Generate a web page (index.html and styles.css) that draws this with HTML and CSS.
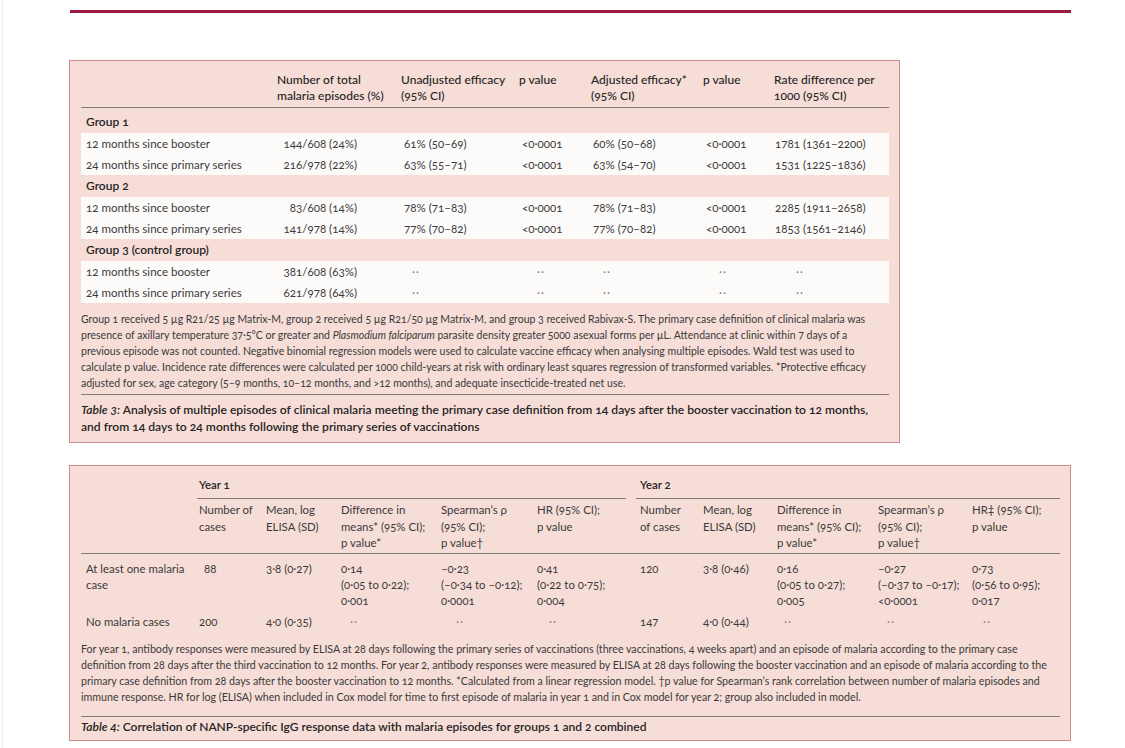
FILE: index.html
```html
<!DOCTYPE html>
<html lang="en">
<head>
<meta charset="utf-8">
<title>Tables 3 and 4</title>
<link rel="stylesheet" href="styles.css">
</head>
<body>
<div class="page">
  <div class="topline"></div>

  <section class="box t3">
    <div class="g3 head">
      <div></div>
      <div>Number of total<br>malaria episodes (%)</div>
      <div>Unadjusted efficacy<br>(95% CI)</div>
      <div>p value</div>
      <div>Adjusted efficacy*<br>(95% CI)</div>
      <div>p value</div>
      <div>Rate difference per<br>1000 (95% CI)</div>
    </div>
    <div class="rule"></div>
    <div class="t3body">
      <div class="grp">Group 1</div>
      <div class="band">
        <div class="g3 row">
          <div class="lab">12 months since booster</div>
          <div class="num">144/608 (24%)</div>
          <div class="c2">61% (50–69)</div>
          <div class="c3">&lt;0·0001</div>
          <div class="c4">60% (50–68)</div>
          <div class="c5">&lt;0·0001</div>
          <div class="c6">1781 (1361–2200)</div>
        </div>
        <div class="g3 row">
          <div class="lab">24 months since primary series</div>
          <div class="num">216/978 (22%)</div>
          <div class="c2">63% (55–71)</div>
          <div class="c3">&lt;0·0001</div>
          <div class="c4">63% (54–70)</div>
          <div class="c5">&lt;0·0001</div>
          <div class="c6">1531 (1225–1836)</div>
        </div>
      </div>
      <div class="grp">Group 2</div>
      <div class="band">
        <div class="g3 row">
          <div class="lab">12 months since booster</div>
          <div class="num">83/608 (14%)</div>
          <div class="c2">78% (71–83)</div>
          <div class="c3">&lt;0·0001</div>
          <div class="c4">78% (71–83)</div>
          <div class="c5">&lt;0·0001</div>
          <div class="c6">2285 (1911–2658)</div>
        </div>
        <div class="g3 row">
          <div class="lab">24 months since primary series</div>
          <div class="num">141/978 (14%)</div>
          <div class="c2">77% (70–82)</div>
          <div class="c3">&lt;0·0001</div>
          <div class="c4">77% (70–82)</div>
          <div class="c5">&lt;0·0001</div>
          <div class="c6">1853 (1561–2146)</div>
        </div>
      </div>
      <div class="grp">Group 3 (control group)</div>
      <div class="band">
        <div class="g3 row">
          <div class="lab">12 months since booster</div>
          <div class="num">381/608 (63%)</div>
          <div class="c2 dots d2">··</div>
          <div class="c3 dots d3">··</div>
          <div class="c4 dots d4">··</div>
          <div class="c5 dots d5">··</div>
          <div class="c6 dots d6">··</div>
        </div>
        <div class="g3 row">
          <div class="lab">24 months since primary series</div>
          <div class="num">621/978 (64%)</div>
          <div class="c2 dots d2">··</div>
          <div class="c3 dots d3">··</div>
          <div class="c4 dots d4">··</div>
          <div class="c5 dots d5">··</div>
          <div class="c6 dots d6">··</div>
        </div>
      </div>
    </div>
    <p class="note n3">Group 1 received 5 µg R21/25 µg Matrix-M, group 2 received 5 µg R21/50 µg Matrix-M, and group 3 received Rabivax-S. The primary case definition of clinical malaria was<br>presence of axillary temperature 37·5°C or greater and <i>Plasmodium falciparum</i> parasite density greater 5000 asexual forms per µL. Attendance at clinic within 7 days of a<br>previous episode was not counted. Negative binomial regression models were used to calculate vaccine efficacy when analysing multiple episodes. Wald test was used to<br>calculate p value. Incidence rate differences were calculated per 1000 child-years at risk with ordinary least squares regression of transformed variables. *Protective efficacy<br>adjusted for sex, age category (5–9 months, 10–12 months, and &gt;12 months), and adequate insecticide-treated net use.</p>
    <div class="rule r3"></div>
    <p class="caption c3cap"><i>Table 3:</i> Analysis of multiple episodes of clinical malaria meeting the primary case definition from 14 days after the booster vaccination to 12 months,<br>and from 14 days to 24 months following the primary series of vaccinations</p>
  </section>

  <section class="box t4">
    <div class="g4 years">
      <div class="y1">Year 1</div>
      <div class="y2">Year 2</div>
    </div>
    <div class="g4 sub">
      <div></div>
      <div>Number of<br>cases</div>
      <div>Mean, log<br>ELISA (SD)</div>
      <div>Difference in<br>means* (95% CI);<br>p value*</div>
      <div>Spearman’s ρ<br>(95% CI);<br>p value†</div>
      <div>HR (95% CI);<br>p value</div>
      <div>Number<br>of cases</div>
      <div>Mean, log<br>ELISA (SD)</div>
      <div>Difference in<br>means* (95% CI);<br>p value*</div>
      <div>Spearman’s ρ<br>(95% CI);<br>p value†</div>
      <div>HR‡ (95% CI);<br>p value</div>
    </div>
    <div class="rule r4"></div>
    <div class="g4 data">
      <div class="lab">At least one malaria<br>case</div>
      <div class="i88">88</div>
      <div>3·8 (0·27)</div>
      <div>0·14<br>(0·05 to 0·22);<br>0·001</div>
      <div>–0·23<br>(–0·34 to –0·12);<br>0·0001</div>
      <div>0·41<br>(0·22 to 0·75);<br>0·004</div>
      <div>120</div>
      <div>3·8 (0·46)</div>
      <div>0·16<br>(0·05 to 0·27);<br>0·005</div>
      <div>–0·27<br>(–0·37 to –0·17);<br>&lt;0·0001</div>
      <div>0·73<br>(0·56 to 0·95);<br>0·017</div>
    </div>
    <div class="g4 data none">
      <div class="lab">No malaria cases</div>
      <div>200</div>
      <div>4·0 (0·35)</div>
      <div class="dots e3">··</div>
      <div class="dots e4">··</div>
      <div class="dots e5">··</div>
      <div>147</div>
      <div>4·0 (0·44)</div>
      <div class="dots e8">··</div>
      <div class="dots e9">··</div>
      <div class="dots e10">··</div>
    </div>
    <p class="note n4">For year 1, antibody responses were measured by ELISA at 28 days following the primary series of vaccinations (three vaccinations, 4 weeks apart) and an episode of malaria according to the primary case<br>definition from 28 days after the third vaccination to 12 months. For year 2, antibody responses were measured by ELISA at 28 days following the booster vaccination and an episode of malaria according to the<br>primary case definition from 28 days after the booster vaccination to 12 months. *Calculated from a linear regression model. †p value for Spearman’s rank correlation between number of malaria episodes and<br>immune response. HR for log (ELISA) when included in Cox model for time to first episode of malaria in year 1 and in Cox model for year 2; group also included in model.</p>
    <div class="rule r4b"></div>
    <p class="caption c4cap"><i>Table 4:</i> Correlation of NANP-specific IgG response data with malaria episodes for groups 1 and 2 combined</p>
  </section>
</div>
</body>
</html>
```

FILE: styles.css
```css
html, body {
  margin: 0;
  padding: 0;
  background: #ffffff;
}

body {
  font-family: Lato, "Liberation Sans", sans-serif;
  color: #3c3a3a;
  font-variant-numeric: oldstyle-nums;
}

.page {
  margin-left: 2px;
  border-left: 1px solid #ececec;
  min-height: 748px;
  box-sizing: border-box;
  padding: 10px 0 0 66px;
}

.topline {
  margin-left: 1px;
  width: 1001px;
  height: 3px;
  background: #9b1d3f;
}

.box {
  box-sizing: border-box;
  background: #f6ddd8;
  border: 1px solid #cf8a8e;
}

.rule {
  height: 1px;
  background: #857a76;
}

.dots {
  color: #8a8282;
  letter-spacing: 1px;
}

/* ---------- Table 3 ---------- */
.t3 {
  width: 831px;
  margin-top: 47px;
  padding: 11px 10px 7px 11px;
}

.g3 {
  display: grid;
  grid-template-columns: 196px 124px 118px 72px 112px 71px 115px;
}

.t3 .head {
  font-size: 12px;
  line-height: 16px;
  font-weight: 500;
  color: #262424;
}

.t3 .head > div {
  white-space: nowrap;
}

.t3 .rule {
  margin-top: 3px;
}

.t3body {
  padding-top: 3px;
}

.grp {
  height: 22px;
  line-height: 22px;
  padding-left: 5px;
  font-size: 12px;
  font-weight: 600;
  color: #262424;
}

.band {
  background: #fdfbfa;
}

.t3 .row {
  height: 21px;
  line-height: 21px;
  font-size: 11.55px;
  white-space: nowrap;
}

.t3 .lab {
  padding-left: 5px;
}

.t3 .num {
  padding-left: 1px;
  width: 79px;
  text-align: right;
}

.t3 .c2 { padding-left: 3px; }
.t3 .c3 { padding-left: 3px; }
.t3 .c4 { padding-left: 2px; }
.t3 .c5 { padding-left: 3px; }
.t3 .c6 { padding-left: 1px; }

.t3 .d2 { padding-left: 11px; }
.t3 .d3 { padding-left: 18px; }
.t3 .d4 { padding-left: 12px; }
.t3 .d5 { padding-left: 16px; }
.t3 .d6 { padding-left: 22px; }

.note {
  margin: 0;
  white-space: nowrap;
  color: #3c3a3a;
}

.n3 {
  margin-top: 8px;
  line-height: 16px;
  font-size: 10.5px;
}

.r3 {
  margin-top: 10px;
}

.caption {
  margin: 0;
  font-weight: 600;
  color: #262424;
  white-space: nowrap;
}

.c3cap {
  margin-top: 6px;
  line-height: 17px;
  font-size: 12.1px;
}

/* ---------- Table 4 ---------- */
.t4 {
  width: 1002px;
  margin-top: 22px;
  padding: 10px 10px 5px 11px;
}

.g4 {
  display: grid;
  grid-template-columns: 118px 67px 75px 100px 96px 103px 63px 74px 101px 94px 88px;
  font-size: 11.4px;
  white-space: nowrap;
}

.years {
  line-height: 18px;
  font-weight: 600;
  color: #262424;
}

.years .y1 {
  grid-column: 2 / 7;
  margin-left: -2px;
  padding-left: 2px;
  margin-right: 14px;
  border-bottom: 1px solid #857a76;
  padding-bottom: 4px;
}

.years .y2 {
  grid-column: 7 / 12;
  margin-left: -4px;
  padding-left: 4px;
  border-bottom: 1px solid #857a76;
  padding-bottom: 4px;
}

.sub {
  margin-top: 3px;
  line-height: 16.5px;
}

.r4 {
  margin-top: 1px;
}

.data {
  margin-top: 7px;
  line-height: 16px;
}

.data .lab {
  padding-left: 5px;
}

.data .i88 {
  padding-left: 5px;
}

.none {
  margin-top: 5px;
}

.none .e3 { padding-left: 9px; }
.none .e4 { padding-left: 15px; }
.none .e5 { padding-left: 12px; }
.none .e8 { padding-left: 7px; }
.none .e9 { padding-left: 9px; }
.none .e10 { padding-left: 11px; }

.n4 {
  margin-top: 11px;
  line-height: 16.3px;
  font-size: 10.65px;
}

.r4b {
  margin-top: 10px;
}

.c4cap {
  margin-top: 2px;
  line-height: 16px;
  font-size: 12px;
}
```
